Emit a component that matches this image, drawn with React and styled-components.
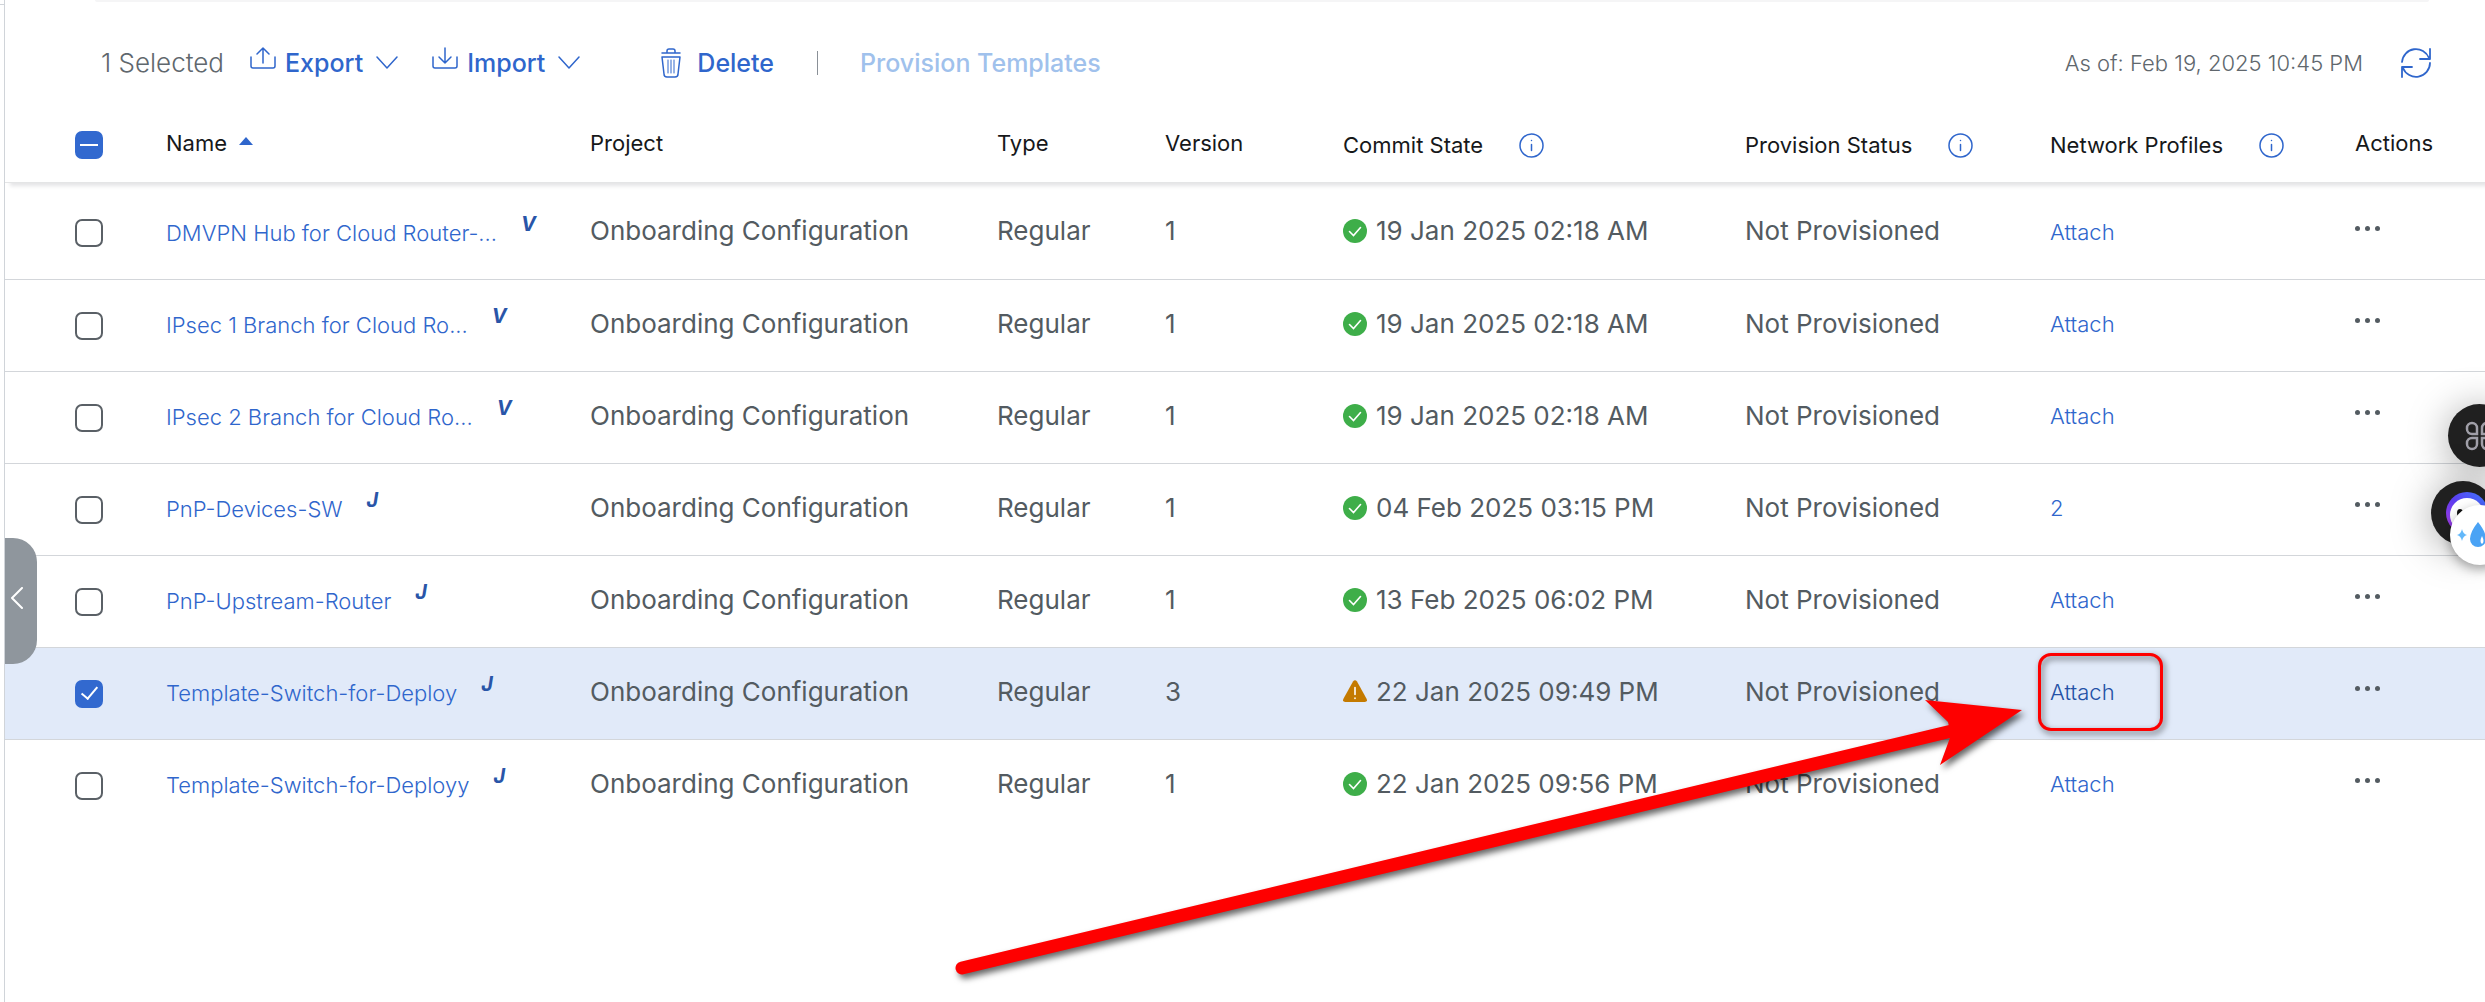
import React, { useEffect, useRef, useState } from "react";
import styled, { createGlobalStyle } from "styled-components";

const GlobalStyle = createGlobalStyle`
  *, *::before, *::after { box-sizing: border-box; }
  body {
    margin: 0;
    background: #fff;
    color: #535b61;
    font-family: Inter, "Liberation Sans", sans-serif;
    font-size: 26px;
    line-height: 32px;
  }
  button {
    font: inherit;
    color: inherit;
    background: none;
    border: 0;
    padding: 0;
    cursor: pointer;
  }
  svg { display: block; flex: none; }
`;

const Page = styled.main`
  position: relative;
  display: flex;
  min-height: 100vh;
  overflow: hidden;
`;

const SideEdge = styled.aside`
  flex: none;
  width: 5px;
  border-right: 1px solid #d0d4d9;

  &::before {
    content: "";
    display: block;
    height: 5px;
    border-bottom: 1px solid #d0d4d9;
  }
`;

const Content = styled.div`
  flex: 1;
  min-width: 0;
`;

const FilterPanelEdge = styled.div`
  height: 2px;
  margin: 0 56px 0 90px;
  border-radius: 0 0 8px 8px;
  background: #f5f5f6;
`;

const Toolbar = styled.div`
  display: flex;
  align-items: center;
  height: 104px;
  padding: 18px 54px 0 96px;
  white-space: nowrap;
`;

const SelectedCount = styled.span`
  margin-right: 26px;
  color: #60676d;
  font-weight: 300;
`;

const ToolButton = styled.button`
  display: flex;
  align-items: center;
  gap: ${(p) => p.$gap || 9}px;
  margin-right: ${(p) => p.$after || 0}px;
  color: #2f66cc;
  font-size: 25px;
  font-weight: 500;

  &:disabled {
    color: #a0c1ec;
    cursor: default;
  }
`;

const ToolLabel = styled.span`
  margin-right: 4px;
`;

const ToolDivider = styled.span`
  width: 1px;
  height: 24px;
  margin: 0 42px 0 39px;
  background: #8a9097;
`;

const Timestamp = styled.span`
  margin-left: auto;
  margin-right: 38px;
  color: #60676d;
  font-size: 22px;
  font-weight: 300;
`;

const IconButton = styled.button`
  display: flex;
  color: #2f66cc;
`;

const Table = styled.table`
  width: 100%;
  table-layout: fixed;
  border-collapse: separate;
  border-spacing: 0;
`;

const Col = styled.col`
  width: ${(p) => (p.$width ? `${p.$width}px` : "auto")};
`;

const HeadRow = styled.tr`
  height: 77px;
  box-shadow: 4px 4px 4px -1px #e4e4e6;
`;

const HeadCell = styled.th`
  padding: 0 0 2px;
  padding-left: ${(p) => (p.$select ? 70 : 0)}px;
  border-bottom: 1px solid #e4e5e6;
  color: #16181a;
  font-size: 22px;
  font-weight: 400;
  text-align: left;
  white-space: nowrap;
`;

const HeadLabel = styled.span`
  display: flex;
  align-items: center;
  gap: ${(p) => p.$gap || 12}px;
  padding-top: ${(p) => (p.$gap ? 4 : 0)}px;
`;

const Row = styled.tr`
  height: 92px;
  background: ${(p) => (p.$selected ? "#e1eaf9" : "transparent")};

  &:first-child { height: 97px; }
  &:first-child > td { padding-top: 4px; }
  &:last-child > td { border-bottom-color: transparent; }
`;

const Cell = styled.td`
  padding: 0 0 4px;
  padding-left: ${(p) => (p.$select ? 70 : 0)}px;
  border-bottom: 1px solid #d3d6da;
  white-space: nowrap;
`;

const Checkbox = styled.input`
  appearance: none;
  display: grid;
  place-items: center;
  width: 28px;
  height: 28px;
  margin: 4px 0 0;
  border: 2px solid #5a6066;
  border-radius: 7px;
  background: #fff;

  &:checked, &:indeterminate {
    border-color: #3269cf;
    background: #3269cf;
  }
  &:checked::before {
    content: "";
    width: 9px;
    height: 16px;
    margin-top: -6px;
    border: solid #fff;
    border-width: 0 2px 2px 0;
    transform: rotate(40deg);
  }
  &:indeterminate::before {
    content: "";
    width: 18px;
    height: 2px;
    background: #fff;
  }
`;

const Link = styled.a`
  color: ${(p) => (p.$active ? "#2451a6" : "#2f66cc")};
  font-size: 22px;
  font-weight: 300;
  text-decoration: none;
`;

const LanguageMark = styled.sup`
  margin-left: 24px;
  color: #2955a8;
  font-size: 20px;
  font-style: italic;
  font-weight: 700;
  line-height: 20px;
`;

const Commit = styled.span`
  display: flex;
  align-items: center;
  gap: 9px;
`;

const MoreButton = styled.button`
  display: flex;
  gap: 5px;
  padding: 4px 0 10px;

  & > i {
    width: 5px;
    height: 5px;
    border-radius: 50%;
    background: #535b61;
  }
`;

const CollapseHandle = styled.button`
  position: absolute;
  left: 5px;
  top: 538px;
  display: flex;
  align-items: center;
  width: 32px;
  height: 126px;
  padding: 0 0 6px 5px;
  border-radius: 0 24px 24px 0;
  background: #8f969d;
  color: #fff;
`;

const Arrow = styled.svg`
  position: absolute;
  left: 940px;
  top: 690px;
  overflow: visible;
  pointer-events: none;
  filter: drop-shadow(3px 4px 3px rgba(0, 0, 0, 0.6));
`;

const Highlight = styled.span`
  position: absolute;
  left: 2038px;
  top: 653px;
  width: 125px;
  height: 78px;
  border: 3px solid #fe0000;
  border-radius: 13px;
  pointer-events: none;
  filter: drop-shadow(2px 3px 3px rgba(0, 0, 0, 0.6));
`;

const Floating = styled.button`
  position: absolute;
  left: ${(p) => p.$x}px;
  top: ${(p) => p.$y}px;
  width: ${(p) => p.$size}px;
  height: ${(p) => p.$size}px;
  border-radius: 50%;
  background: ${(p) => (p.$light ? "#fff" : "#202020")};
  box-shadow: 0 4px ${(p) => (p.$light ? 12 : 40)}px rgba(0, 0, 0, 0.35);
`;

const stroke = { fill: "none", stroke: "currentColor", strokeWidth: 1.5, strokeLinecap: "round", strokeLinejoin: "round" };

const ExportIcon = () => (
  <svg width="26" height="32" viewBox="0 0 26 32" {...stroke}>
    <path d="M1 10v9q0 2 2 2h20q2 0 2-2v-9M13 16V1M7 7l6-6 6 6" />
  </svg>
);

const ImportIcon = () => (
  <svg width="26" height="32" viewBox="0 0 26 32" {...stroke}>
    <path d="M1 10v9q0 2 2 2h20q2 0 2-2v-9M13 1v15M7 10l6 6 6-6" />
  </svg>
);

const ChevronDown = () => (
  <svg width="22" height="14" viewBox="0 0 22 14" {...stroke}>
    <path d="M1 1l10 11L21 1" />
  </svg>
);

const TrashIcon = () => (
  <svg width="20" height="30" viewBox="0 0 20 30" {...stroke}>
    <path d="M1 5h18M6 4V3q0-2 2-2h4q2 0 2 2v1M1 9h18l-2 17q0 3-3 3H6q-3 0-3-3z" />
    <path strokeWidth="1" d="M7 12v13M10 12v13M13 12v13" />
  </svg>
);

const RefreshIcon = () => (
  <svg width="30" height="30" viewBox="0 0 30 30" {...stroke} strokeWidth="1.800">
    <path d="M1 14A14 14 0 0 1 28 10M29 1v10H19M29 15A14 14 0 0 1 2 20M1 29V19h10" />
  </svg>
);

const InfoIcon = () => (
  <svg width="25" height="25" viewBox="0 0 25 25" {...stroke}>
    <circle cx="12.5" cy="12.5" r="11.5" />
    <path d="M12.500 11.500v6M12.500 7.500v0.100" />
  </svg>
);

const SortIcon = () => (
  <svg width="14" height="12" viewBox="0 0 14 12">
    <path d="M7 0l7 8H0z" fill="#2f66cc" />
  </svg>
);

const OkIcon = () => (
  <svg width="24" height="24" viewBox="0 0 24 24">
    <circle cx="12" cy="12" r="12" fill="#3eae49" />
    <path d="M6.500 12.500l4 4 7-8" fill="none" stroke="#fff" strokeWidth="1.600" strokeLinecap="round" />
  </svg>
);

const WarningIcon = () => (
  <svg width="24" height="24" viewBox="0 0 24 24">
    <path d="M10 1.500q2-2.500 4 0l9.700 17.500q1 3-2 3H2.300q-3 0-2-3z" fill="#c47a00" />
    <path d="M12 7.500v7M12 18v0.500" stroke="#fff" strokeWidth="1.600" strokeLinecap="round" />
  </svg>
);

const ROWS = [
  { name: "DMVPN Hub for Cloud Router-...", mark: "V", version: 1, commit: "19 Jan 2025 02:18 AM" },
  { name: "IPsec 1 Branch for Cloud Ro...", mark: "V", version: 1, commit: "19 Jan 2025 02:18 AM" },
  { name: "IPsec 2 Branch for Cloud Ro...", mark: "V", version: 1, commit: "19 Jan 2025 02:18 AM" },
  { name: "PnP-Devices-SW", mark: "J", version: 1, commit: "04 Feb 2025 03:15 PM", profiles: "2" },
  { name: "PnP-Upstream-Router", mark: "J", version: 1, commit: "13 Feb 2025 06:02 PM" },
  { name: "Template-Switch-for-Deploy", mark: "J", version: 3, commit: "22 Jan 2025 09:49 PM", warning: true },
  { name: "Template-Switch-for-Deployy", mark: "J", version: 1, commit: "22 Jan 2025 09:56 PM" },
];

function InfoHead({ children }) {
  return (
    <HeadCell scope="col">
      <HeadLabel $gap={36}>
        {children}
        <IconButton type="button" aria-label={`About ${children}`}><InfoIcon /></IconButton>
      </HeadLabel>
    </HeadCell>
  );
}

export default function App() {
  const [selected, setSelected] = useState([5]);
  const allRef = useRef(null);

  useEffect(() => {
    allRef.current.indeterminate = selected.length > 0 && selected.length < ROWS.length;
  }, [selected]);

  const toggle = (i) =>
    setSelected((s) => (s.includes(i) ? s.filter((n) => n !== i) : [...s, i]));

  return (
    <Page>
      <GlobalStyle />
      <SideEdge />
      <Content>
        <FilterPanelEdge />
        <Toolbar>
          <SelectedCount>{selected.length} Selected</SelectedCount>
          <ToolButton type="button" $after={34}><ExportIcon /><ToolLabel>Export</ToolLabel><ChevronDown /></ToolButton>
          <ToolButton type="button" $after={81}><ImportIcon /><ToolLabel>Import</ToolLabel><ChevronDown /></ToolButton>
          <ToolButton type="button" $gap={16}><TrashIcon /><ToolLabel>Delete</ToolLabel></ToolButton>
          <ToolDivider />
          <ToolButton type="button" disabled>Provision Templates</ToolButton>
          <Timestamp>As of: Feb 19, 2025 10:45 PM</Timestamp>
          <IconButton type="button" aria-label="Refresh"><RefreshIcon /></IconButton>
        </Toolbar>
        <Table>
          <colgroup>
            <Col $width={161} /><Col /><Col $width={407} /><Col $width={168} /><Col $width={178} />
            <Col $width={402} /><Col $width={305} /><Col $width={305} /><Col $width={130} />
          </colgroup>
          <thead>
            <HeadRow>
              <HeadCell $select scope="col">
                <Checkbox
                  ref={allRef}
                  type="checkbox"
                  aria-label="Select all templates"
                  checked={selected.length === ROWS.length}
                  onChange={() => setSelected(selected.length === ROWS.length ? [] : ROWS.map((_, i) => i))}
                />
              </HeadCell>
              <HeadCell scope="col"><HeadLabel>Name<SortIcon /></HeadLabel></HeadCell>
              <HeadCell scope="col">Project</HeadCell>
              <HeadCell scope="col">Type</HeadCell>
              <HeadCell scope="col">Version</HeadCell>
              <InfoHead>Commit State</InfoHead>
              <InfoHead>Provision Status</InfoHead>
              <InfoHead>Network Profiles</InfoHead>
              <HeadCell scope="col">Actions</HeadCell>
            </HeadRow>
          </thead>
          <tbody>
            {ROWS.map((row, i) => {
              const on = selected.includes(i);
              return (
                <Row key={row.name} $selected={on}>
                  <Cell $select>
                    <Checkbox type="checkbox" aria-label={`Select ${row.name}`} checked={on} onChange={() => toggle(i)} />
                  </Cell>
                  <Cell><Link href="#template">{row.name}</Link><LanguageMark>{row.mark}</LanguageMark></Cell>
                  <Cell>Onboarding Configuration</Cell>
                  <Cell>Regular</Cell>
                  <Cell>{row.version}</Cell>
                  <Cell><Commit>{row.warning ? <WarningIcon /> : <OkIcon />}{row.commit}</Commit></Cell>
                  <Cell>Not Provisioned</Cell>
                  <Cell><Link href="#profiles" $active={on}>{row.profiles || "Attach"}</Link></Cell>
                  <Cell><MoreButton type="button" aria-label={`Actions for ${row.name}`}><i /><i /><i /></MoreButton></Cell>
                </Row>
              );
            })}
          </tbody>
        </Table>
      </Content>

      <CollapseHandle type="button" aria-label="Collapse panel">
        <svg width="14" height="22" viewBox="0 0 14 22" {...stroke} strokeWidth="2"><path d="M12 1L2 11l10 10" /></svg>
      </CollapseHandle>

      <Highlight />
      <Arrow width="1090" height="290" viewBox="0 0 1090 290" aria-hidden="true">
        <path d="M22 278L1020 39" stroke="#fe0000" strokeWidth="13" strokeLinecap="round" />
        <path d="M1082 20L985 10L1008 32L1011 45L1000 75z" fill="#fe0000" />
      </Arrow>

      <Floating type="button" aria-label="Shortcuts" $x={2448} $y={404} $size={63}>
        <svg width="63" height="63" viewBox="0 0 63 63" fill="none" stroke="#a09fa8" strokeWidth="2.500">
          <path d="M29 30h-5a5 5 0 0 1-5-5v-1a5 5 0 0 1 10 0zM34 30h5a5 5 0 0 0 5-5v-1a5 5 0 0 0-10 0zM29 34h-5a5 5 0 0 0-5 5v1a5 5 0 0 0 10 0zM34 34h5a5 5 0 0 1 5 5v1a5 5 0 0 1-10 0z" />
        </svg>
      </Floating>
      <Floating type="button" aria-label="Assistant" $x={2431} $y={481} $size={64}>
        <svg width="64" height="64" viewBox="0 0 64 64">
          <defs>
            <linearGradient id="ring" x1="1" y1="0" x2="0" y2="1">
              <stop offset="0" stopColor="#3d7bff" />
              <stop offset="0.500" stopColor="#5b3df0" />
              <stop offset="1" stopColor="#b03ae0" />
            </linearGradient>
          </defs>
          <circle cx="36" cy="32" r="21" fill="url(#ring)" />
          <circle cx="36" cy="34" r="17" fill="#fff" />
          <ellipse cx="29" cy="32" rx="3" ry="4" fill="#111" />
        </svg>
      </Floating>
      <Floating type="button" aria-label="Clean up" $x={2450} $y={505} $size={60} $light>
        <svg width="60" height="60" viewBox="0 0 60 60">
          <path d="M28 17q8 10 8 17a8 8 0 0 1-16 0q0-7 8-17z" fill="#4aa3f5" />
          <path d="M12 24q1 5 5 6-4 1-5 6-1-5-5-6 4-1 5-6z" fill="#63b8fa" />
          <path d="M32 31q3 6 0 8-3-2 0-8z" fill="#fff" />
        </svg>
      </Floating>
    </Page>
  );
}
